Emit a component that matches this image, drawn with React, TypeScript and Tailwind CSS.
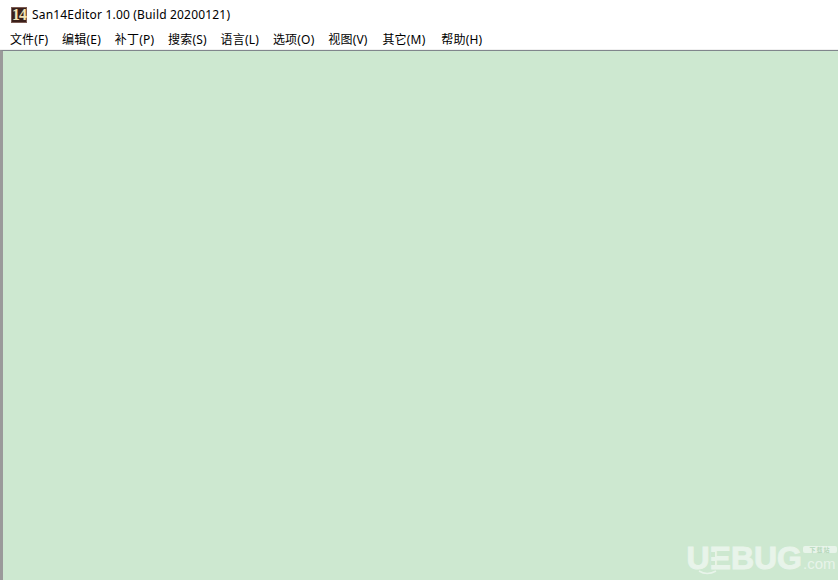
const menus = [
  { label: '文件(F)', cls: '' },
  { label: '编辑(E)', cls: '' },
  { label: '补丁(P)', cls: '' },
  { label: '搜索(S)', cls: '' },
  { label: '语言(L)', cls: '' },
  { label: '选项(O)', cls: '' },
  { label: '视图(V)', cls: '' },
  { label: '其它(M)', cls: 'ml-[1px]' },
  { label: '帮助(H)', cls: 'ml-[2px]' },
];

function AppIcon() {
  return (
    <div className="flex h-[16px] w-[16px] items-center justify-center border border-[#7a5a52] bg-[#3a1f1a] font-['Liberation_Serif',serif] text-[16px] leading-none font-bold tracking-[-1px] text-[#f3e4b4]">
      14
    </div>
  );
}

function Watermark() {
  return (
    <div className="absolute right-[1px] bottom-[8px] flex h-[28px] items-start text-[#e8f4ea]">
      <div className="relative font-['Liberation_Sans',sans-serif] text-[32px] leading-[28px] font-bold [-webkit-text-stroke:1px_#e8f4ea]">
        UEBUG
        <svg className="absolute top-[0px] left-[0px] h-[36px] w-[48px]" viewBox="0 0 48 36" fill="none">
          {/* logo details over the U and E: eye, smile, open stem */}
          <path d="M9 9l5 3-5 3" stroke="#cde8d0" strokeWidth="1.2" />
          <path d="M13 27q8 5 17 0" stroke="#e8f4ea" strokeWidth="1.5" />
          <rect x="25" y="8" width="4" height="5" fill="#cde8d0" />
          <rect x="25" y="17" width="4" height="4" fill="#cde8d0" />
        </svg>
      </div>
      <div className="ml-[1px] flex w-[34px] flex-col items-stretch">
        <div className="mt-[2px] rounded-[2px] bg-[#e8f4ea] text-center font-['Noto_Sans_CJK_SC',sans-serif] text-[6px] leading-[7px] font-bold tracking-[1px] text-[#b5d8ba]">
          下载站
        </div>
        <div className="mt-[3px] font-['Liberation_Sans',sans-serif] text-[15px] leading-[16px]">.com</div>
      </div>
    </div>
  );
}

export default function App() {
  return (
    <div className="flex h-[580px] w-[838px] flex-col overflow-hidden bg-white font-['Noto_Sans','Noto_Sans_CJK_SC',sans-serif] text-[12px] text-black">
      <div className="flex h-[29px] items-center gap-[5px] pl-[11px]">
        <AppIcon />
        <span className="text-[12px] tracking-[0.18px]">San14Editor 1.00 (Build 20200121)</span>
      </div>
      <div className="flex h-[20px] items-center pl-[3px] pt-[1px]">
        {menus.map((m) => (
          <div key={m.label} className={`${m.cls} px-[6.9px] tracking-[0.2px] whitespace-nowrap`}>
            {m.label}
          </div>
        ))}
      </div>
      <div className="h-[1px] bg-[#f0f0f0]" />
      <div className="relative flex-1 border-t border-l-[3px] border-t-[#80868c] border-l-[#9a9a9a] bg-[#cde8d0]">
        <Watermark />
      </div>
    </div>
  );
}
